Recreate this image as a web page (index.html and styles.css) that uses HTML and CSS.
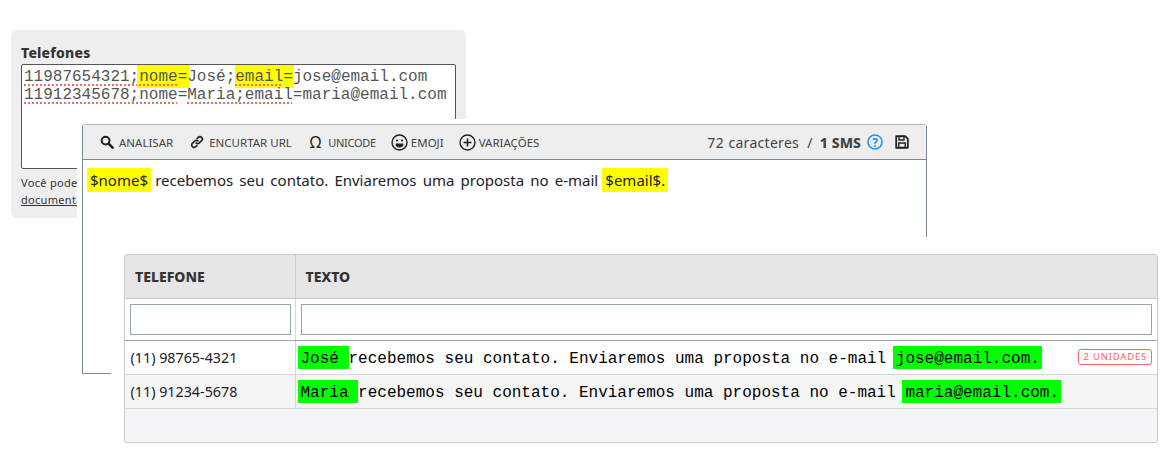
FILE: index.html
```html
<!DOCTYPE html>
<html lang="en">
<head>
  <meta charset="UTF-8">
  <title>SMS Preview</title>
  <link rel="stylesheet" href="styles.css">
</head>
<body>
  <div class="stage">
    <!-- Phones panel -->
    <div class="phones-panel">
      <div class="phones-label">Telefones</div>
      <div class="phones-box">
        <div><span class="typo">11987654321;<mark class="first">nome</mark></span><mark class="last">=</mark>Jos&eacute;;<mark class="typo">email</mark><mark class="last">=</mark>jose@email.com</div>
        <div><span class="typo">11912345678;nome</span>=<span class="typo">Maria;email</span>=maria@email.com</div>
      </div>
      <p class="phones-help">Voc&ecirc; pode<br><a href="#">documenta</a></p>
    </div>

    <!-- Message editor -->
    <div class="editor">
      <div class="toolbar">
        <div class="tool">
          <svg width="14" height="14" viewBox="0 0 14 14"><circle cx="5.6" cy="5.6" r="3.9" fill="none" stroke="#222" stroke-width="2"/><path d="M8.6 8.6l4 4" stroke="#222" stroke-width="2.6" stroke-linecap="round"/></svg>
          <span>ANALISAR</span>
        </div>
        <div class="tool">
          <svg width="14" height="14" viewBox="0 0 14 14" fill="none" stroke="#222" stroke-width="1.7" stroke-linecap="round"><path d="M6 8a2.3 2.3 0 0 0 3.3 0l2.3-2.4a2.3 2.3 0 0 0-3.3-3.3L7.200 3.400"/><path d="M8 6a2.300 2.300 0 0 0-3.300 0L2.400 8.400a2.300 2.300 0 0 0 3.300 3.300l1.100-1.100"/></svg>
          <span>ENCURTAR URL</span>
        </div>
        <div class="tool">
          <span class="omega">&Omega;</span>
          <span class="tool-narrow">UNICODE</span>
        </div>
        <div class="tool tool-tight">
          <svg width="17" height="17" viewBox="0 0 17 17"><circle cx="8.500" cy="8.500" r="7.500" fill="none" stroke="#222" stroke-width="1.400"/><circle cx="6" cy="6.500" r="1.100" fill="#222"/><circle cx="11" cy="6.500" r="1.100" fill="#222"/><path d="M4.500 9.500h8a4 4 0 0 1-8 0z" fill="#222"/></svg>
          <span>EMOJI</span>
        </div>
        <div class="tool tool-tight tool-last">
          <svg width="17" height="17" viewBox="0 0 17 17"><circle cx="8.500" cy="8.500" r="7.500" fill="none" stroke="#222" stroke-width="1.400"/><path d="M8.500 4.500v8M4.500 8.500h8" stroke="#222" stroke-width="1.600"/></svg>
          <span>VARIA&Ccedil;&Otilde;ES</span>
        </div>
        <div class="counter">
          <span class="count-text">72 caracteres<span class="sep">/</span><b>1 SMS</b></span>
          <svg width="16" height="16" viewBox="0 0 16 16"><circle cx="8" cy="8" r="7" fill="none" stroke="#1e96f0" stroke-width="1.600"/><text class="help-mark" x="8" y="12.500" text-anchor="middle">?</text></svg>
          <svg class="icon-save" width="14" height="14" viewBox="0 0 14 14"><path d="M1.200 1.200h9l2.600 2.600v9H1.200z" fill="none" stroke="#222" stroke-width="1.800" stroke-linejoin="round"/><path d="M4 1.500h5v3.500H4zM3.800 8h6.400v4.500H3.800z" fill="none" stroke="#222" stroke-width="1.400"/></svg>
        </div>
      </div>
      <div class="editor-body">
        <mark class="var">$nome$</mark> recebemos seu contato. Enviaremos uma proposta no e-mail <mark class="var">$email$.</mark>
      </div>
    </div>

    <!-- Preview table -->
    <div class="preview-wrap">
      <div class="preview">
        <table>
          <thead>
            <tr>
              <th class="col-phone">TELEFONE</th>
              <th>TEXTO</th>
            </tr>
            <tr class="filters">
              <td><input type="text"></td>
              <td><input type="text"></td>
            </tr>
          </thead>
          <tbody>
            <tr>
              <td class="phone">(11) 98765-4321</td>
              <td>
                <div class="msg-row">
                  <div class="msg"><mark class="val">Jos&eacute; </mark>recebemos seu contato. Enviaremos uma proposta no e-mail <mark class="val val-end">jose@email.com.</mark></div>
                  <span class="badge">2 UNIDADES</span>
                </div>
              </td>
            </tr>
            <tr class="alt">
              <td class="phone">(11) 91234-5678</td>
              <td>
                <div class="msg-row">
                  <div class="msg"><mark class="val">Maria </mark>recebemos seu contato. Enviaremos uma proposta no e-mail <mark class="val val-end">maria@email.com.</mark></div>
                </div>
              </td>
            </tr>
          </tbody>
        </table>
        <div class="preview-foot"></div>
      </div>
    </div>
  </div>
</body>
</html>
```

FILE: styles.css
```css
* {
  box-sizing: border-box;
}

body {
  font-family: "Noto Sans", Arial, sans-serif;
  background-color: #fff;
  color: #333;
  margin: 0;
  padding: 0;
}

.stage {
  position: relative;
  width: 1173px;
  height: 473px;
  overflow: hidden;
}

mark {
  background-color: #ff0;
  color: inherit;
  padding: 3px 0 2px;
}

mark.first {
  padding-left: 2.500px;
  margin-left: -2.500px;
}

mark.last {
  padding-right: 1.500px;
  margin-right: -1.500px;
}

/* Phones panel */
.phones-panel {
  position: absolute;
  left: 11px;
  top: 30px;
  width: 455px;
  height: 188px;
  background-color: #eee;
  border-radius: 6px;
  padding: 13px 10px 0;
}

.phones-label {
  font-size: 14px;
  font-weight: 800;
  line-height: 20px;
  letter-spacing: 0.2px;
}

.phones-box {
  height: 105px;
  margin-top: 1px;
  background-color: #fff;
  border: 1px solid #555;
  border-radius: 2px;
  padding: 3px 2px 0;
  font-family: "Liberation Mono", monospace;
  font-size: 16px;
  line-height: 18px;
  color: #555;
}

.typo {
  text-decoration: underline dotted #f66;
  text-decoration-thickness: 2px;
  text-underline-offset: 3px;
}

.phones-help {
  margin: 5px 0 0;
  font-size: 11px;
  letter-spacing: 0.3px;
  line-height: 17px;
}

.phones-help a {
  color: #333;
}

/* Message editor */
.editor {
  position: absolute;
  left: 82px;
  top: 124px;
  width: 845px;
  height: 250px;
  background-color: #fff;
  border: 1px solid #7b8794;
  border-top-color: #bbb;
  border-radius: 3px 3px 0 0;
  box-shadow: 0 0 0 5px #fff;
}

.toolbar {
  height: 35px;
  display: flex;
  align-items: center;
  background-color: #eee;
  border-bottom: 1px solid #7b8794;
  padding: 0 17px;
  gap: 17px;
}

.tool {
  display: flex;
  align-items: center;
  gap: 5px;
  font-size: 11.500px;
  color: #444;
}

.tool-tight {
  gap: 3px;
  margin-left: -2px;
}

.tool-narrow {
  font-size: 11px;
  letter-spacing: -0.300px;
}

.omega {
  font-size: 16px;
  line-height: 16px;
  margin: 0 2px 0 1px;
  color: #222;
}

.counter {
  margin-left: auto;
  display: flex;
  align-items: center;
  gap: 6px;
  font-size: 14px;
  color: #444;
}

.count-text {
  letter-spacing: 0.3px;
  word-spacing: 0.5px;
}

.sep {
  margin: 0 7px 0 8px;
}

.count-text b {
  font-weight: 800;
  letter-spacing: 0;
}

.help-mark {
  font-size: 12px;
  font-weight: 700;
  fill: #1e96f0;
}

.icon-save {
  margin-left: 6px;
}

.editor-body {
  padding: 8px 6px;
  font-size: 15px;
  line-height: 24px;
  color: #222;
  word-spacing: 2.250px;
}

.var {
  display: inline-block;
  padding: 0 3px;
  margin: 0 -2px;
}

/* Preview table */
.preview-wrap {
  position: absolute;
  left: 111px;
  top: 237px;
  width: 1062px;
  height: 236px;
  background-color: #fff;
  padding: 17px 15px 30px 13px;
}

.preview {
  height: 189px;
  background-color: #f4f5f7;
  border: 1px solid #c8cacc;
  border-radius: 3px;
  overflow: hidden;
}

.preview table {
  width: 100%;
  border-collapse: collapse;
  table-layout: fixed;
}

.preview th {
  height: 43px;
  background-color: #e6e6e6;
  border-bottom: 1px solid #c8cacc;
  text-align: left;
  font-size: 14px;
  font-weight: 800;
  padding: 0 10px;
  color: #333;
}

.col-phone {
  width: 170px;
  border-right: 1px solid #c8cacc;
}

.preview td {
  height: 34px;
  padding: 0 5px;
  background-color: #fff;
  border-bottom: 1px solid #d5d7da;
  font-size: 14.300px;
  color: #222;
}

.preview td:first-child {
  padding-right: 4px;
  border-right: 1px solid #d5d7da;
}

.preview td.phone {
  padding-left: 5.500px;
}

.preview .alt td {
  background-color: #f5f5f6;
}

.preview .filters td {
  height: 42px;
  border-bottom: 1px solid #9aa5b1;
}

.filters input {
  display: block;
  width: 100%;
  height: 31px;
  border: 1px solid #9aa5b1;
  background-color: #fff;
  padding: 0 4px;
}

.msg-row {
  display: flex;
  align-items: center;
  justify-content: space-between;
}

.msg {
  font-family: "Liberation Mono", monospace;
  font-size: 16px;
  color: #000;
  white-space: pre;
  line-height: 20px;
}

.val {
  display: inline-block;
  background-color: #0f0;
  padding: 3px 0 0 3px;
  margin-left: -3px;
}

.val-end {
  padding-right: 2px;
}

.badge {
  border: 1px solid #f66;
  border-radius: 3px;
  font-size: 9.500px;
  letter-spacing: 0.8px;
  line-height: 14px;
  padding: 0 4px;
  color: #f66;
}

.preview-foot {
  height: 34px;
}
```
